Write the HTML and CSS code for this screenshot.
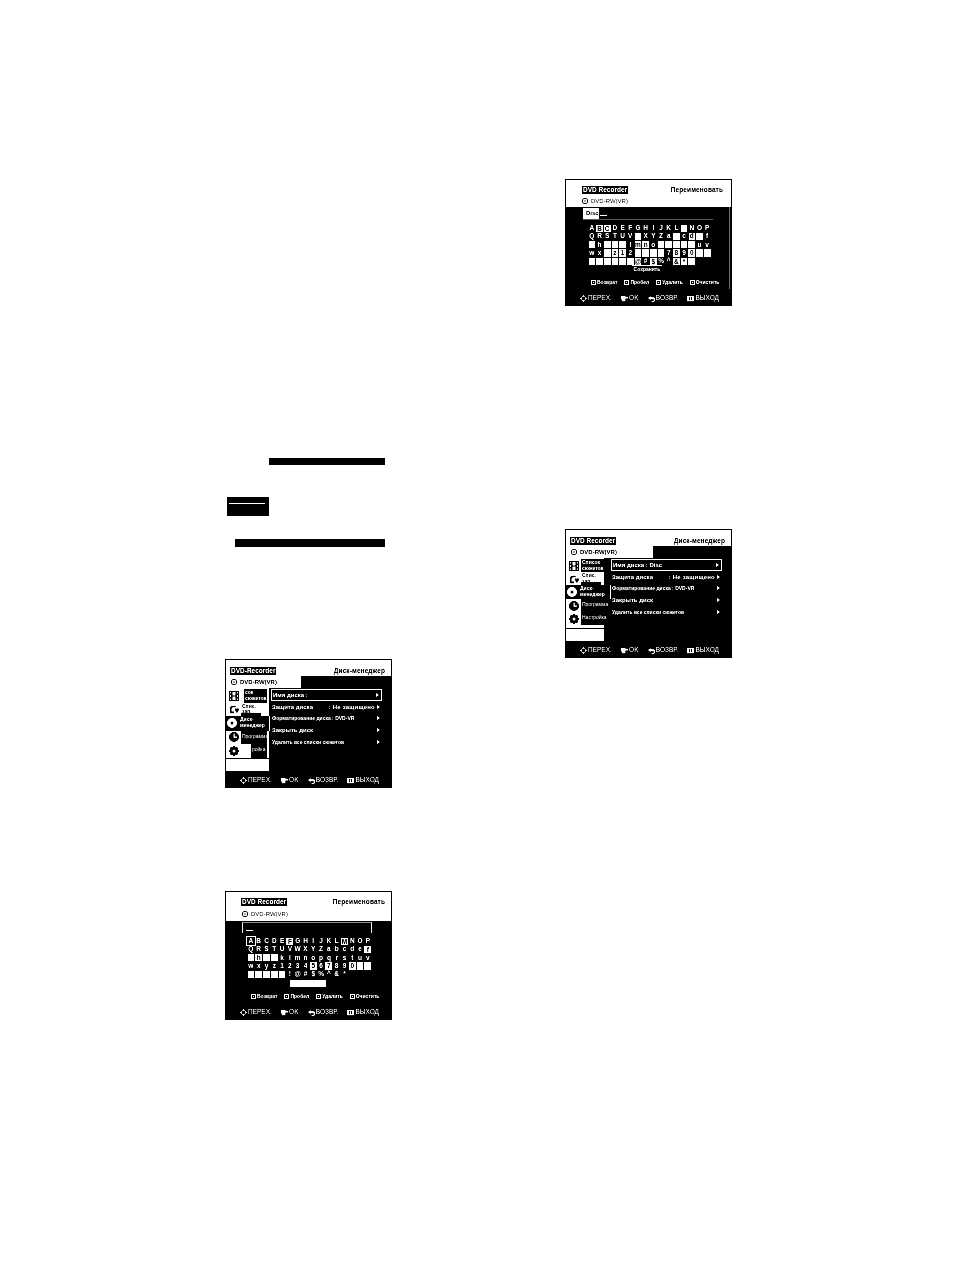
FILE: index.html
```html
<!DOCTYPE html>
<html lang="ru">
<head>
<meta charset="utf-8">
<title>DVD Recorder</title>
<link rel="stylesheet" href="styles.css">
</head>
<body>
<svg class="defs" width="0" height="0">
  <symbol id="i-nav" viewBox="0 0 8 8"><path d="M4 0l2 2H2zM4 8L2 6h4zM0 4l2-2v4zM8 4L6 6V2z"/></symbol>
  <symbol id="i-ok" viewBox="0 0 8 8"><path d="M0 1h5v1h3v2H5v3H1V5H0z"/></symbol>
  <symbol id="i-back" viewBox="0 0 8 8"><path d="M3 1L0 3.500 3 6V4.500h2.500a1 1 0 0 1 0 2.500H4v1h1.500a2 2 0 0 0 0-5.500H3z"/></symbol>
  <symbol id="i-exit" viewBox="0 0 8 8"><path d="M0 1h8v6H0zM2.500 2v4h1V2zm2 0v4h1V2z" fill-rule="evenodd"/></symbol>
  <symbol id="i-disc" viewBox="0 0 8 8"><path d="M4 0a4 4 0 1 0 0 8a4 4 0 0 0 0-8zm0 1a3 3 0 1 1 0 6a3 3 0 0 1 0-6zm0 2a1 1 0 1 0 0 2a1 1 0 0 0 0-2z" fill-rule="evenodd"/></symbol>
  <symbol id="i-film" viewBox="0 0 10 10"><path d="M0 0h10v10H0zM1 1v1.500h1V1zm0 3v2h1V4zm0 3.500V9h1V7.500zM8 1v1.500h1V1zm0 3v2h1V4zm0 3.500V9h1V7.500zM3.500 1v3.500h3V1zm0 4.500V9h3V5.500z" fill-rule="evenodd"/></symbol>
  <symbol id="i-list" viewBox="0 0 12 10"><path d="M1 5a4 4 0 0 1 4-4h3v2H5a2 2 0 0 0-2 2v3h3v2H1zM7 5c1-1.500 2-1 2.500 0C10 4 11 3.500 12 5c0 2-2 3.500-2.500 5C9 8.500 7 7 7 5z"/></symbol>
  <symbol id="i-round" viewBox="0 0 10 10"><path d="M5 0a5 5 0 1 0 0 10a5 5 0 0 0 0-10zm0 3.500a1.500 1.500 0 1 1 0 3a1.500 1.500 0 0 1 0-3z" fill-rule="evenodd"/></symbol>
  <symbol id="i-clock" viewBox="0 0 10 10"><path d="M5 0a5 5 0 1 0 0 10a5 5 0 0 0 0-10zM4.500 1.500h1.200v3h2.300v1.200H4.500z" fill-rule="evenodd"/></symbol>
  <symbol id="i-gear" viewBox="0 0 10 10"><path d="M4 0h2l.4 1.500 1.400-.7 1.400 1.400-.7 1.400L10 4v2l-1.500.4.700 1.400-1.400 1.400-1.400-.7L6 10H4l-.4-1.500-1.400.7-1.400-1.400.7-1.400L0 6V4l1.500-.4-.7-1.400 1.400-1.400 1.400.7zM5 3.500a1.500 1.500 0 1 0 0 3a1.500 1.500 0 0 0 0-3z" fill-rule="evenodd"/></symbol>
</svg>

<main class="page">

<section class="screen screen-a">
  <header class="head">
    <span class="logo">DVD Recorder</span>
    <span class="title">Переименовать</span>
  </header>
  <div class="tab"><svg class="disc"><use href="#i-disc"/></svg>DVD-RW(VR)</div>
  <div class="rename rename-a">
    <div class="input input-a"><span class="typed">Disc</span><span class="cursor"></span></div>
    <div class="keys">
      <span>A</span><span class="on">B</span><span class="on">C</span><span>D</span><span>E</span><span>F</span><span>G</span><span>H</span><span>I</span><span>J</span><span>K</span><span>L</span><span class="on"></span><span>N</span><span>O</span><span>P</span>
      <span>Q</span><span>R</span><span>S</span><span>T</span><span>U</span><span>V</span><span class="on"></span><span>X</span><span>Y</span><span>Z</span><span>a</span><span class="on"></span><span>c</span><span class="sel">d</span><span class="on"></span><span>f</span>
      <span class="on"></span><span>h</span><span class="on"></span><span class="on"></span><span class="on"></span><span>l</span><span class="on">m</span><span class="on">n</span><span>o</span><span class="on"></span><span class="on"></span><span class="on"></span><span class="on"></span><span class="on"></span><span>u</span><span>v</span>
      <span>w</span><span>x</span><span class="on"></span><span class="on">z</span><span class="on">1</span><span>2</span><span class="on"></span><span class="on"></span><span class="on"></span><span class="on"></span><span>7</span><span class="on">8</span><span>9</span><span class="on">0</span><span class="on"></span><span class="on"></span>
      <span class="on"></span><span class="on"></span><span class="on"></span><span class="on"></span><span class="on"></span><span class="on"></span><span class="on">@</span><span>#</span><span class="on">$</span><span>%</span><span>^</span><span class="on">&amp;</span><span class="on">*</span><span class="on"></span><span class="blank"></span><span class="blank"></span>
    </div>
    <div class="save"><span class="save-bar"></span>Сохранить</div>
    <div class="legend">
      <span><i class="key"></i>Возврат</span><span><i class="key"></i>Пробел</span><span><i class="key"></i>Удалить</span><span><i class="key"></i>Очистить</span>
    </div>
  </div>
  <footer class="foot">
    <span><svg><use href="#i-nav"/></svg>ПЕРЕХ.</span><span><svg><use href="#i-ok"/></svg>OK</span><span><svg><use href="#i-back"/></svg>ВОЗВР.</span><span><svg><use href="#i-exit"/></svg>ВЫХОД</span>
  </footer>
</section>

<div class="bar bar-1"></div>
<div class="note"><span></span></div>
<div class="bar bar-2"></div>

<section class="screen screen-b">
  <header class="head">
    <span class="logo">DVD Recorder</span>
    <span class="title">Диск-менеджер</span>
  </header>
  <div class="tab tab-b"><svg class="disc"><use href="#i-disc"/></svg>DVD-RW(VR)</div>
  <div class="body">
    <nav class="side">
      <div class="nav"><svg><use href="#i-film"/></svg><span class="lab">Список сюжетов</span></div>
      <div class="nav"><svg><use href="#i-list"/></svg><span class="lab lab-s">Спис. зап.</span></div>
      <div class="nav cur"><svg><use href="#i-round"/></svg><span class="lab">Диск-менеджер</span></div>
      <div class="nav"><svg><use href="#i-clock"/></svg><span class="lab">Программа</span></div>
      <div class="nav"><svg><use href="#i-gear"/></svg><span class="lab">Настройка</span></div>
      <div class="side-end"></div>
    </nav>
    <ul class="menu">
      <li class="act"><span>Имя диска : Disc</span><b></b></li>
      <li><span>Защита диска</span><em>: Не защищено</em><b></b></li>
      <li class="small"><span>Форматирование диска : DVD-VR</span><b></b></li>
      <li><span>Закрыть диск</span><b></b></li>
      <li class="small"><span>Удалить все списки сюжетов</span><b></b></li>
    </ul>
  </div>
  <footer class="foot">
    <span><svg><use href="#i-nav"/></svg>ПЕРЕХ.</span><span><svg><use href="#i-ok"/></svg>OK</span><span><svg><use href="#i-back"/></svg>ВОЗВР.</span><span><svg><use href="#i-exit"/></svg>ВЫХОД</span>
  </footer>
</section>

<section class="screen screen-c">
  <header class="head">
    <span class="logo">DVD-Recorder</span>
    <span class="title">Диск-менеджер</span>
  </header>
  <div class="tab tab-c"><svg class="disc"><use href="#i-disc"/></svg>DVD-RW(VR)</div>
  <div class="body">
    <nav class="side">
      <div class="nav"><svg><use href="#i-film"/></svg><span class="lab lab-narrow">сок сюжетов</span></div>
      <div class="nav"><svg><use href="#i-list"/></svg><span class="lab lab-s">Спис. зап.</span></div>
      <div class="nav cur"><svg><use href="#i-round"/></svg><span class="lab">Диск-менеджер</span></div>
      <div class="nav"><svg><use href="#i-clock"/></svg><span class="lab">Программа</span></div>
      <div class="nav"><svg><use href="#i-gear"/></svg><span class="lab lab-r">ройка</span></div>
      <div class="side-end"></div>
    </nav>
    <ul class="menu">
      <li class="act"><span>Имя диска :</span><b></b></li>
      <li><span>Защита диска</span><em>: Не защищено</em><b></b></li>
      <li class="small"><span>Форматирование диска : DVD-VR</span><b></b></li>
      <li><span>Закрыть диск</span><b></b></li>
      <li class="small"><span>Удалить все списки сюжетов</span><b></b></li>
    </ul>
  </div>
  <footer class="foot">
    <span><svg><use href="#i-nav"/></svg>ПЕРЕХ.</span><span><svg><use href="#i-ok"/></svg>OK</span><span><svg><use href="#i-back"/></svg>ВОЗВР.</span><span><svg><use href="#i-exit"/></svg>ВЫХОД</span>
  </footer>
</section>

<section class="screen screen-d">
  <header class="head head-d">
    <span class="logo">DVD Recorder</span>
    <span class="title">Переименовать</span>
  </header>
  <div class="tab tab-d"><svg class="disc"><use href="#i-disc"/></svg>DVD-RW(VR)</div>
  <div class="rename rename-d">
    <div class="input input-d"><span class="cursor"></span></div>
    <div class="keys keys-d">
      <span class="box">A</span><span>B</span><span>C</span><span>D</span><span>E</span><span class="on">F</span><span>G</span><span>H</span><span>I</span><span>J</span><span>K</span><span>L</span><span class="on">M</span><span>N</span><span>O</span><span>P</span>
      <span>Q</span><span>R</span><span>S</span><span>T</span><span>U</span><span>V</span><span>W</span><span>X</span><span>Y</span><span>Z</span><span>a</span><span>b</span><span>c</span><span>d</span><span>e</span><span class="on">f</span>
      <span class="on"></span><span class="on">h</span><span class="on"></span><span class="on"></span><span>k</span><span>l</span><span>m</span><span>n</span><span>o</span><span>p</span><span>q</span><span>r</span><span>s</span><span>t</span><span>u</span><span>v</span>
      <span>w</span><span>x</span><span>y</span><span>z</span><span>1</span><span>2</span><span>3</span><span>4</span><span class="on">5</span><span>6</span><span class="on">7</span><span>8</span><span>9</span><span class="on">0</span><span class="on"></span><span class="on"></span>
      <span class="on"></span><span class="on"></span><span class="on"></span><span class="on"></span><span class="on"></span><span>!</span><span>@</span><span>#</span><span>$</span><span>%</span><span>^</span><span>&amp;</span><span>*</span><span class="blank"></span><span class="blank"></span><span class="blank"></span>
    </div>
    <div class="space"></div>
    <div class="legend legend-d">
      <span><i class="key"></i>Возврат</span><span><i class="key"></i>Пробел</span><span><i class="key"></i>Удалить</span><span><i class="key"></i>Очистить</span>
    </div>
  </div>
  <footer class="foot">
    <span><svg><use href="#i-nav"/></svg>ПЕРЕХ.</span><span><svg><use href="#i-ok"/></svg>OK</span><span><svg><use href="#i-back"/></svg>ВОЗВР.</span><span><svg><use href="#i-exit"/></svg>ВЫХОД</span>
  </footer>
</section>

</main>
</body>
</html>
```

FILE: styles.css
```css
* { box-sizing: border-box; }
html, body { margin: 0; background: #fff; }
.defs { position: absolute; }
.page {
  position: relative;
  width: 954px;
  height: 1284px;
  overflow: hidden;
  font-family: "Liberation Sans", Arial, sans-serif;
  filter: grayscale(1) contrast(1.5);
}

/* Each screenshot sits at its own spot on the scanned page */
.screen {
  position: absolute;
  width: 167px;
  display: flex;
  flex-direction: column;
  border: 1px solid #000;
  background: #000;
  color: #fff;
}
.screen-a { left: 565px; top: 179px; height: 127px; }
.screen-b { left: 565px; top: 529px; height: 129px; }
.screen-c { left: 225px; top: 659px; height: 129px; }
.screen-d { left: 225px; top: 891px; height: 129px; }

.bar, .note { position: absolute; background: #000; }
.bar-1 { left: 269px; top: 458px; width: 116px; height: 7px; }
.bar-2 { left: 235px; top: 539px; width: 150px; height: 8px; }
.note { left: 227px; top: 497px; width: 42px; height: 19px; padding: 6px 4px 0 2px; }
.note span { display: block; height: 1px; background: #fff; }

/* Header */
.head {
  height: 16px;
  flex: none;
  display: flex;
  align-items: flex-end;
  justify-content: space-between;
  padding: 0 6px 0 4px;
  background: #fff;
  color: #000;
}
.logo {
  font-size: 6.500px;
  font-weight: 700;
  line-height: 8px;
  background: #000;
  color: #fff;
  padding: 0 1px;
  margin-bottom: 1px;
}
.title { font-size: 6.500px; line-height: 8px; font-weight: 700; margin-bottom: 1px; letter-spacing: 0.1px; }
.screen-a .head { padding-left: 16px; padding-right: 8px; height: 15px; }
.head-d { padding-left: 15px; padding-right: 6px; height: 15px; }
.tab {
  height: 12px;
  flex: none;
  display: flex;
  align-items: center;
  gap: 3px;
  padding-left: 5px;
  background: #fff;
  color: #000;
  font-size: 6px;
  line-height: 8px;
}
.screen-a .tab { padding-left: 16px; }
.tab-d { padding-left: 16px; height: 14px; }
.tab-b, .tab-c { width: 87px; padding-left: 5px; font-weight: 700; }
.tab-c { width: 75px; }
.disc { width: 6px; height: 6px; fill: #000; flex: none; }

/* Menu screens */
.body { flex: 1; min-height: 0; display: flex; }
.side {
  width: 38px;
  flex: none;
  display: flex;
  flex-direction: column;
  padding-top: 1px;
  background: #fff;
}
.screen-c .side { width: 43px; }
.nav {
  height: 13px;
  flex: none;
  width: 42px;
  display: flex;
  align-items: center;
  gap: 2px;
  padding-left: 3px;
  color: #000;
}
.screen-c .nav { width: 43px; height: 13.500px; }
.nav svg { width: 10px; height: 10px; flex: none; fill: #000; }
.lab {
  flex: 1;
  min-width: 0;
  align-self: stretch;
  background: #000;
  color: #fff;
  font-size: 5px;
  line-height: 5.500px;
  padding: 1px 0 0 1px;
  font-weight: 700;
}
.lab-s { background: #fff; color: #000; flex: none; width: 20px; border-bottom: 3px solid #000; }
.screen-c .lab { margin-right: 2px; }
.screen-c .lab-narrow { margin-left: 3px; }
.screen-c .lab-r { margin-left: 10px; }
.nav.cur { background: #000; color: #fff; height: 14px; width: 45px; border-right: 1px solid #fff; padding-left: 1px; }
.screen-c .nav.cur { width: 44px; height: 14.500px; }
.nav.cur svg { fill: #fff; }
.nav.cur .lab { background: #000; margin: 0; }
.nav:nth-child(4) .lab, .nav:nth-child(5) .lab { font-size: 5px; font-weight: 400; line-height: 11px; padding-top: 0; }
.side-end { height: 13px; margin-top: auto; border-top: 1px solid #000; }

.menu {
  flex: 1;
  list-style: none;
  margin: 0;
  padding: 1px 9px 0 7px;
  font-size: 6px;
  font-weight: 700;
}
.screen-c .menu { padding-left: 2px; }
.menu li {
  height: 11.700px;
  display: flex;
  align-items: center;
  white-space: nowrap;
  padding: 0 2px 0 1px;
}
.menu li.act { border: 1px solid #fff; }
.menu li.small { font-size: 5px; }
.menu em { font-style: normal; margin-left: auto; margin-right: 2px; letter-spacing: 0.2px; }
.menu span + b { margin-left: auto; }
.menu b {
  width: 0;
  height: 0;
  flex: none;
  border-left: 3px solid #fff;
  border-top: 2px solid transparent;
  border-bottom: 2px solid transparent;
}

/* Rename screens */
.rename { flex: 1; min-height: 0; display: flex; flex-direction: column; }
.rename-a { border-right: 1px solid #777; margin-right: 1px; padding: 2px 0 0 17px; }
.rename-d { padding: 1px 0 0 16px; }
.input {
  flex: none;
  display: flex;
  align-items: flex-end;
  width: 130px;
  border-bottom: 1px solid #666;
  height: 11px;
}
.input-d {
  height: 11px;
  border-top: 1px solid #888;
  border-left: 1px solid #ccc;
  border-right: 1px solid #ccc;
  border-bottom: 0;
  padding: 0 0 2px 3px;
}
.typed {
  background: #fff;
  color: #000;
  font-size: 6px;
  font-weight: 700;
  line-height: 10px;
  height: 11px;
  width: 16px;
  padding-left: 3px;
}
.cursor { width: 7px; height: 1px; background: #fff; margin: 0 0 3px 1px; }
.input-d .cursor { margin: 0; }
.keys {
  flex: none;
  display: grid;
  grid-template-columns: repeat(16, 7.700px);
  grid-auto-rows: 8.250px;
  margin: 4px 0 0 5px;
  font-size: 6.500px;
  font-weight: 700;
  line-height: 8px;
  text-align: center;
}
.keys-d { margin: 4px 0 0 5px; grid-template-columns: repeat(16, 7.800px); grid-auto-rows: 8.300px; }
.keys .on { background: #fff; color: #000; margin: 0.500px; }
.keys .box { outline: 1px solid #fff; outline-offset: 0; }
.keys .sel { background: #fff; color: #000; outline: 1px solid #000; outline-offset: -1px; }
.save { flex: none; width: 30px; margin: 0 0 0 49px; font-size: 5px; font-weight: 700; line-height: 6px; text-align: center; white-space: nowrap; }
.save-bar { display: block; height: 1px; background: #fff; }
.space { flex: none; width: 36px; height: 7px; margin: 2px 0 0 48px; background: #fff; }
.legend {
  flex: none;
  display: flex;
  gap: 7px;
  margin: 7px 0 0 8px;
  font-size: 5px;
  font-weight: 700;
  line-height: 6px;
  white-space: nowrap;
}
.legend-d { margin: 6px 0 0 9px; gap: 7px; }
.key { display: inline-block; width: 5px; height: 5px; margin-right: 1px; background: #fff; border: 1px solid #fff; box-shadow: inset 0 0 0 1px #000; vertical-align: -0.500px; }

/* Footer */
.foot {
  flex: none;
  height: 16px;
  margin-top: auto;
  display: flex;
  justify-content: space-between;
  align-items: center;
  padding: 2px 12px 0 14px;
  font-size: 6.500px;
  line-height: 8px;
  background: #000;
  color: #fff;
}
.foot span { display: flex; align-items: center; gap: 1px; }
.foot svg { width: 7px; height: 7px; fill: #fff; flex: none; }
```
